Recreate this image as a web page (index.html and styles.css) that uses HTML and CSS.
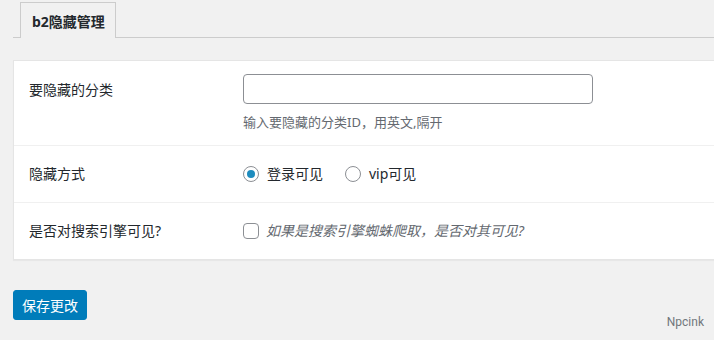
FILE: index.html
```html
<!DOCTYPE html>
<html lang="zh-CN">
<head>
<meta charset="utf-8">
<title>b2隐藏管理</title>
<link rel="stylesheet" href="styles.css">
</head>
<body>
<div class="wrap">
  <div class="nav-tabs">
    <span class="tab active">b2隐藏管理</span>
  </div>
  <div class="card">
    <div class="row row-top">
      <div class="label label-top">要隐藏的分类</div>
      <div class="field">
        <input class="text-input" type="text">
        <p class="desc">输入要隐藏的分类ID，用英文,隔开</p>
      </div>
    </div>
    <div class="row">
      <div class="label">隐藏方式</div>
      <div class="field options">
        <label class="opt"><span class="radio checked"></span><span>登录可见</span></label>
        <label class="opt"><span class="radio"></span><span>vip可见</span></label>
      </div>
    </div>
    <div class="row">
      <div class="label">是否对搜索引擎可见?</div>
      <div class="field options">
        <label class="opt opt-check"><span class="checkbox"></span><em class="hint">如果是搜索引擎蜘蛛爬取，是否对其可见?</em></label>
      </div>
    </div>
  </div>
  <div class="footer">
    <button class="btn-primary" type="button">保存更改</button>
    <span class="credit">Npcink</span>
  </div>
</div>
</body>
</html>
```

FILE: styles.css
```css
html, body {
  margin: 0;
  padding: 0;
  background: #f1f1f1;
  height: 100%;
  overflow: hidden;
}
body {
  font-family: "Segoe UI", "Noto Sans", "Noto Sans CJK SC", sans-serif;
  font-size: 14px;
  color: #23282d;
}
.wrap {
  padding: 2px 0 0 13px;
}
.nav-tabs {
  display: flex;
  padding-left: 7px;
  border-bottom: 1px solid #ccc;
  height: 35px;
  margin-right: -2px;
}
.tab {
  display: flex;
  align-items: center;
  padding: 0 10px 0 11px;
  border: 1px solid #ccc;
  border-bottom: none;
  box-sizing: border-box;
  height: 36px;
  margin-bottom: -1px;
  background: #f1f1f1;
  font-weight: 700;
  font-size: 14px;
  color: #23282d;
  font-family: "Noto Sans", "Noto Sans CJK SC", sans-serif;
}
.card {
  margin-top: 22px;
  margin-right: -2px;
  background: #fff;
  border: 1px solid #e5e5e5;
  box-shadow: 0 1px 1px rgba(0,0,0,0.04);
}
.row {
  display: flex;
  align-items: center;
  height: 56px;
  border-top: 1px solid #f0f0f0;
  padding: 0 15px;
}
.row-top {
  align-items: flex-start;
  height: 84px;
  border-top: none;
  box-sizing: border-box;
  padding-top: 13px;
}
.label {
  width: 214px;
  flex: none;
  line-height: 20px;
}
.label-top {
  padding-top: 6px;
}
.field {
  flex: 1;
}
.text-input {
  display: block;
  box-sizing: border-box;
  width: 350px;
  height: 30px;
  margin: 0;
  border: 1px solid #8c8f94;
  border-radius: 4px;
  background: #fff;
  font: inherit;
}
.desc {
  margin: 9px 0 0;
  font-size: 13px;
  line-height: 18px;
  color: #646970;
}
.options {
  display: flex;
  align-items: center;
}
.opt {
  display: flex;
  align-items: center;
  gap: 8px;
  margin-right: 22px;
  line-height: 20px;
}
.opt-check {
  gap: 7px;
}
.radio {
  width: 16px;
  height: 16px;
  box-sizing: border-box;
  border: 1px solid #8c8f94;
  border-radius: 50%;
  background: #fff;
  display: flex;
  align-items: center;
  justify-content: center;
  flex: none;
}
.radio.checked::before {
  content: "";
  width: 8px;
  height: 8px;
  border-radius: 50%;
  background: #1e8cbe;
}
.checkbox {
  width: 16px;
  height: 16px;
  box-sizing: border-box;
  border: 1px solid #8c8f94;
  border-radius: 4px;
  background: #fff;
  flex: none;
}
.hint {
  font-style: italic;
  color: #646970;
}
.footer {
  display: flex;
  justify-content: space-between;
  align-items: flex-end;
  margin-top: 30px;
  padding-right: 10px;
}
.btn-primary {
  width: 74px;
  height: 30px;
  margin: 0;
  padding: 0;
  background: #007cba;
  border: 1px solid #007cba;
  border-radius: 3px;
  color: #fff;
  font-family: "Noto Sans CJK SC", sans-serif;
  font-size: 14px;
}
.credit {
  font-family: Roboto, "Noto Sans", sans-serif;
  font-size: 12px;
  line-height: 16px;
  color: #72777c;
  margin-bottom: -10px;
}
```
